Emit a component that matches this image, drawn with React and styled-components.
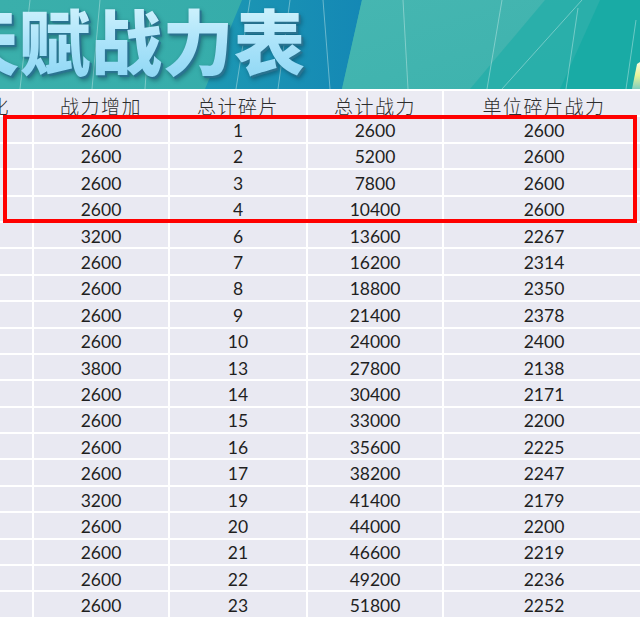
import React from "react";
import styled, { createGlobalStyle } from "styled-components";

const Global = createGlobalStyle`
  html, body { margin: 0; padding: 0; background: #ffffff; overflow: hidden; }
  body { width: 640px; height: 619px; font-family: "Lato", "Noto Sans CJK SC", sans-serif; }
`;

const Page = styled.div`
  width: 640px;
  height: 619px;
  overflow: hidden;
  background: #ffffff;
`;

const Banner = styled.header`
  display: grid;
  width: 640px;
  height: 89px;
  overflow: hidden;
`;

const BannerArt = styled.svg`
  grid-area: 1 / 1;
  width: 640px;
  height: 89px;
  display: block;
`;

const Title = styled.h1`
  grid-area: 1 / 1;
  z-index: 1;
  margin: 0 0 0 -52px;
  padding-top: 3px;
  font-family: "Noto Sans CJK SC", sans-serif;
  font-weight: 900;
  font-size: 71px;
  line-height: 1;
  letter-spacing: 0.5px;
  white-space: nowrap;
  background: linear-gradient(180deg, #d4f4fd 0%, #ade4fa 45%, #88d4f3 100%);
  -webkit-background-clip: text;
  background-clip: text;
  color: transparent;
  filter: drop-shadow(2px 2px 0 #2a7390) drop-shadow(1px 2px 2px rgba(10, 50, 70, 0.45));
`;

const TableWrap = styled.section`
  position: relative;
  padding-top: 2px;
`;

const Grid = styled.div`
  display: grid;
  grid-template-columns: 32px 134px 136px 134px 200px;
  grid-auto-rows: 24.4px;
  column-gap: 2px;
  row-gap: 2px;
  width: 644px;
`;

const Cell = styled.div`
  display: flex;
  align-items: center;
  justify-content: center;
  padding-top: 2px;
  box-sizing: border-box;
  background: #e9e9f2;
  color: #1f1f1f;
  font-family: "Lato", sans-serif;
  font-size: 17.5px;
  white-space: nowrap;
  overflow: hidden;
`;

const HeadCell = styled(Cell)`
  background: #ebebf3;
  color: #2d2d2d;
  font-family: "Noto Sans CJK SC", sans-serif;
  font-weight: 300;
  font-size: 19px;
  letter-spacing: 1.5px;
  padding-top: 4px;
  justify-content: ${(p) => (p.$cut ? "flex-end" : "center")};
  padding-right: ${(p) => (p.$cut ? "22px" : "0")};
`;

const Highlight = styled.div`
  position: absolute;
  left: 3px;
  top: 26px;
  width: 634px;
  height: 108px;
  box-sizing: border-box;
  border: 4px solid #ff0000;
  pointer-events: none;
`;

const headers = ["强化", "战力增加", "总计碎片", "总计战力", "单位碎片战力"];

const rows = [
  [2600, 1, 2600, 2600],
  [2600, 2, 5200, 2600],
  [2600, 3, 7800, 2600],
  [2600, 4, 10400, 2600],
  [3200, 6, 13600, 2267],
  [2600, 7, 16200, 2314],
  [2600, 8, 18800, 2350],
  [2600, 9, 21400, 2378],
  [2600, 10, 24000, 2400],
  [3800, 13, 27800, 2138],
  [2600, 14, 30400, 2171],
  [2600, 15, 33000, 2200],
  [2600, 16, 35600, 2225],
  [2600, 17, 38200, 2247],
  [3200, 19, 41400, 2179],
  [2600, 20, 44000, 2200],
  [2600, 21, 46600, 2219],
  [2600, 22, 49200, 2236],
  [2600, 23, 51800, 2252],
];

const lines = [
  [30, 0, 20, 89],
  [100, 0, 92, 89],
  [150, 15, 145, 89],
  [250, 0, 236, 89],
  [290, 0, 278, 89],
  [323, 0, 330, 89],
  [403, 0, 408, 89],
  [502, 0, 487, 89],
  [582, 0, 502, 89],
  [578, 8, 566, 89],
  [636, 20, 626, 89],
];

function BannerBackground() {
  return (
    <BannerArt viewBox="0 0 640 89" aria-hidden="true">
      <defs>
        <linearGradient id="leftTeal" x1="0" y1="0" x2="1" y2="0">
          <stop offset="0" stopColor="#3aafab" />
          <stop offset="0.75" stopColor="#32aaaa" />
          <stop offset="1" stopColor="#2aa0ad" />
        </linearGradient>
        <linearGradient id="band" x1="0" y1="0" x2="1" y2="0">
          <stop offset="0" stopColor="#1d98b3" />
          <stop offset="1" stopColor="#1488b5" />
        </linearGradient>
        <linearGradient id="rightTeal" x1="0" y1="0" x2="1" y2="1">
          <stop offset="0" stopColor="#46b6b1" />
          <stop offset="1" stopColor="#3cb2ad" />
        </linearGradient>
        <linearGradient id="spike" x1="0" y1="0" x2="0" y2="1">
          <stop offset="0" stopColor="#fbfde0" />
          <stop offset="0.5" stopColor="#e6f39a" />
          <stop offset="1" stopColor="#7fd0bf" />
        </linearGradient>
      </defs>
      <rect x="0" y="0" width="640" height="89" fill="url(#leftTeal)" />
      <polygon points="242,0 362,0 342,89 205,89" fill="url(#band)" />
      <polygon points="362,0 640,0 640,89 342,89" fill="url(#rightTeal)" />
      <polygon points="545,0 640,0 640,89 470,89" fill="#23aea8" opacity="0.75" />
      <polygon points="600,0 640,0 640,89 560,89" fill="#15aaa4" opacity="0.8" />
      {lines.map(([x1, y1, x2, y2], i) => (
        <line
          key={i}
          x1={x1}
          y1={y1}
          x2={x2}
          y2={y2}
          stroke="#cfeeea"
          strokeOpacity="0.45"
          strokeWidth="1"
        />
      ))}
      <polygon points="637,64 640,62 640,89 632,89" fill="url(#spike)" />
    </BannerArt>
  );
}

export default function App() {
  return (
    <>
      <Global />
      <Page>
        <Banner>
          <BannerBackground />
          <Title>天赋战力表</Title>
        </Banner>
        <TableWrap>
          <Grid>
            {headers.map((h, i) => (
              <HeadCell key={h} $cut={i === 0}>
                {h}
              </HeadCell>
            ))}
            {rows.map((r, ri) => (
              <React.Fragment key={ri}>
                <Cell />
                {r.map((v, ci) => (
                  <Cell key={ci}>{v}</Cell>
                ))}
              </React.Fragment>
            ))}
          </Grid>
          <Highlight />
        </TableWrap>
      </Page>
    </>
  );
}
